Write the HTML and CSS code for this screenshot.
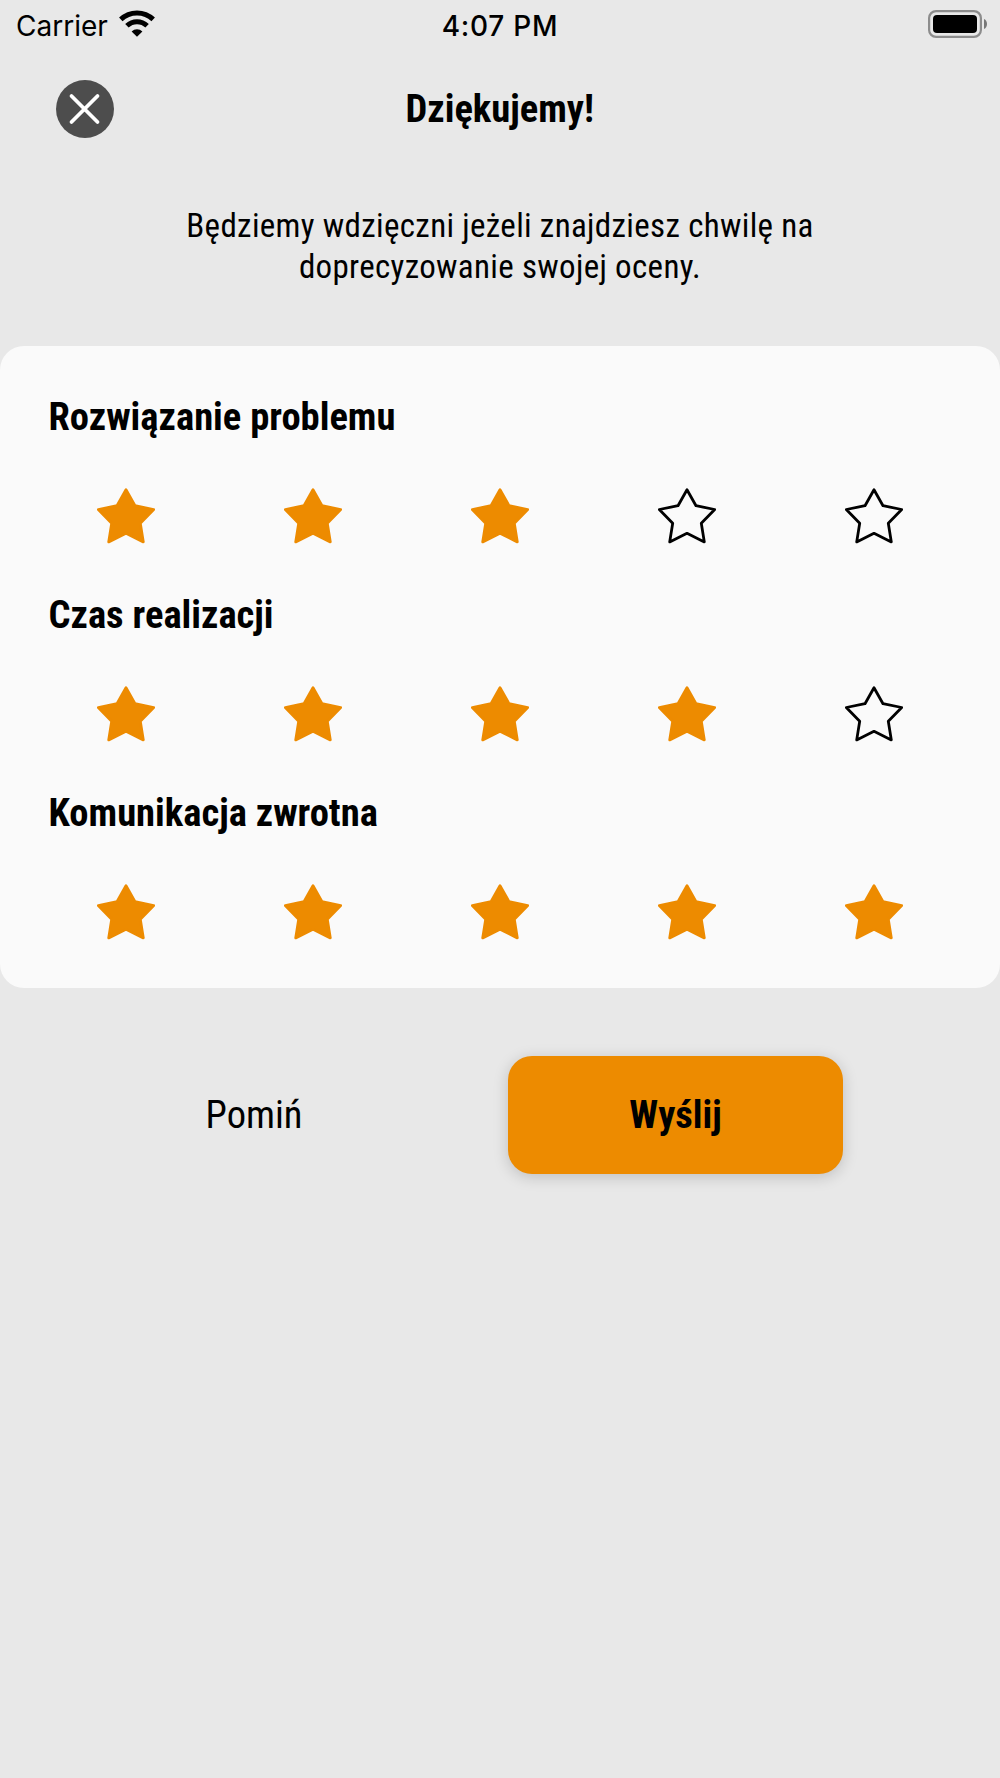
FILE: index.html
```html
<!DOCTYPE html>
<html lang="pl">
<head>
<meta charset="utf-8">
<title>Dziękujemy!</title>
<link rel="stylesheet" href="styles.css">
</head>
<body>
<svg class="defs" width="0" height="0" aria-hidden="true">
  <symbol id="star" viewBox="0 0 58 58">
    <path d="M29 1.8L38 17.7L56.7 21.5L43.3 35.2L46.3 53.9L29 45.3L11.7 53.9L14.7 35.2L1.3 21.5L20 17.7Z"/>
  </symbol>
</svg>
<div class="screen">
  <div class="status">
    <div class="carrier"><span class="carrier-name">Carrier</span>
      <svg class="wifi" viewBox="0 0 36 27" width="36" height="27">
        <path class="arc" d="M1.8 9.4A23.5 23.5 0 0 1 34.2 9.4"/>
        <path class="arc" d="M7.9 15.7A14.7 14.7 0 0 1 28.1 15.7"/>
        <path d="M18 26.8L12.6 21.4A7.8 7.8 0 0 1 23.4 21.4Z"/>
      </svg>
    </div>
    <div class="time">4:07 PM</div>
    <svg class="battery" viewBox="0 0 60 28" width="60" height="28">
      <rect x="1.1" y="1.1" width="51.8" height="25.8" rx="7" fill="none" stroke="#8c8c8c" stroke-width="2.2"/>
      <rect x="5" y="5" width="44" height="18" rx="4"/>
      <path d="M56 9C60 10.5 60 17.5 56 19Z" fill="#777"/>
    </svg>
  </div>
  <header class="header">
    <button class="close" aria-label="Zamknij">
      <svg viewBox="0 0 58 58" width="58" height="58"><circle cx="29" cy="29" r="29" fill="#4d4d4d"/><path d="M15.5 16L41.5 42M41.5 16L15.5 42" stroke="#fff" stroke-width="3.8" stroke-linecap="round"/></svg>
    </button>
    <h1 class="title">Dziękujemy!</h1>
  </header>
  <p class="intro">Będziemy wdzięczni jeżeli znajdziesz chwilę na<br>doprecyzowanie swojej oceny.</p>
  <main class="card">
    <section class="question">
      <h2 class="label">Rozwiązanie problemu</h2>
      <div class="stars">
        <svg class="star on"><use href="#star"/></svg><svg class="star on"><use href="#star"/></svg><svg class="star on"><use href="#star"/></svg><svg class="star"><use href="#star"/></svg><svg class="star"><use href="#star"/></svg>
      </div>
    </section>
    <section class="question">
      <h2 class="label">Czas realizacji</h2>
      <div class="stars">
        <svg class="star on"><use href="#star"/></svg><svg class="star on"><use href="#star"/></svg><svg class="star on"><use href="#star"/></svg><svg class="star on"><use href="#star"/></svg><svg class="star"><use href="#star"/></svg>
      </div>
    </section>
    <section class="question">
      <h2 class="label">Komunikacja zwrotna</h2>
      <div class="stars">
        <svg class="star on"><use href="#star"/></svg><svg class="star on"><use href="#star"/></svg><svg class="star on"><use href="#star"/></svg><svg class="star on"><use href="#star"/></svg><svg class="star on"><use href="#star"/></svg>
      </div>
    </section>
  </main>
  <div class="actions">
    <button class="btn">Pomiń</button>
    <button class="btn primary">Wyślij</button>
  </div>
</div>
</body>
</html>
```

FILE: styles.css
```css
* { box-sizing: border-box; }
body { margin: 0; background: #e8e8e8; color: #000; font-family: "Roboto Condensed", Roboto, sans-serif; font-stretch: 75%; }
.defs { display: block; }
.screen { display: flex; flex-direction: column; width: 1000px; height: 1778px; }
.status { display: grid; grid-template-columns: 1fr auto 1fr; align-items: center; height: 52px; padding: 0 12px 0 16px; font-family: Inter, sans-serif; font-stretch: 100%; font-size: 28px; }
.carrier { display: flex; align-items: center; gap: 11px; }
.wifi { margin-top: -5px; }
.arc { fill: none; stroke: #000; stroke-width: 5; }
.time { margin-left: -4px; font-weight: 500; letter-spacing: .75px; }
.battery { justify-self: end; margin-top: -4px; }
.header { display: grid; grid-template-columns: 1fr auto 1fr; align-items: center; height: 113px; padding: 0 56px 0 55.5px; }
.close { width: 58px; height: 58px; padding: 0; border: 0; background: none; }
.close svg { display: block; }
.title { margin: 0; font-size: 38.6px; font-weight: 700; line-height: 46px; }
.intro { margin: 41px 0 58.5px; text-align: center; font-size: 33px; line-height: 40.5px; letter-spacing: .33px; }
.card { height: 642px; padding: 48px 32px 0; border-radius: 24px; background: #fafafa; }
.question { height: 198px; }
.label { margin: 0 16.5px 48.5px; font-size: 38.6px; font-weight: 700; line-height: 46px; }
.stars { display: grid; grid-template-columns: repeat(5, 1fr); justify-items: center; }
.star { display: block; width: 58px; height: 58px; fill: none; stroke: #000; stroke-width: 2.8; stroke-linejoin: round; }
.star.on { fill: #ed8b00; stroke: #ed8b00; }
.actions { display: grid; grid-template-columns: 508px 335px; margin-top: 68px; }
.btn { height: 118px; padding: 0; border: 0; border-radius: 24px; background: none; color: #000; font: inherit; font-stretch: inherit; font-size: 38.5px; }
.primary { background: #ed8b00; font-weight: 700; box-shadow: 0 3px 15px rgba(0, 0, 0, .18); }
```
